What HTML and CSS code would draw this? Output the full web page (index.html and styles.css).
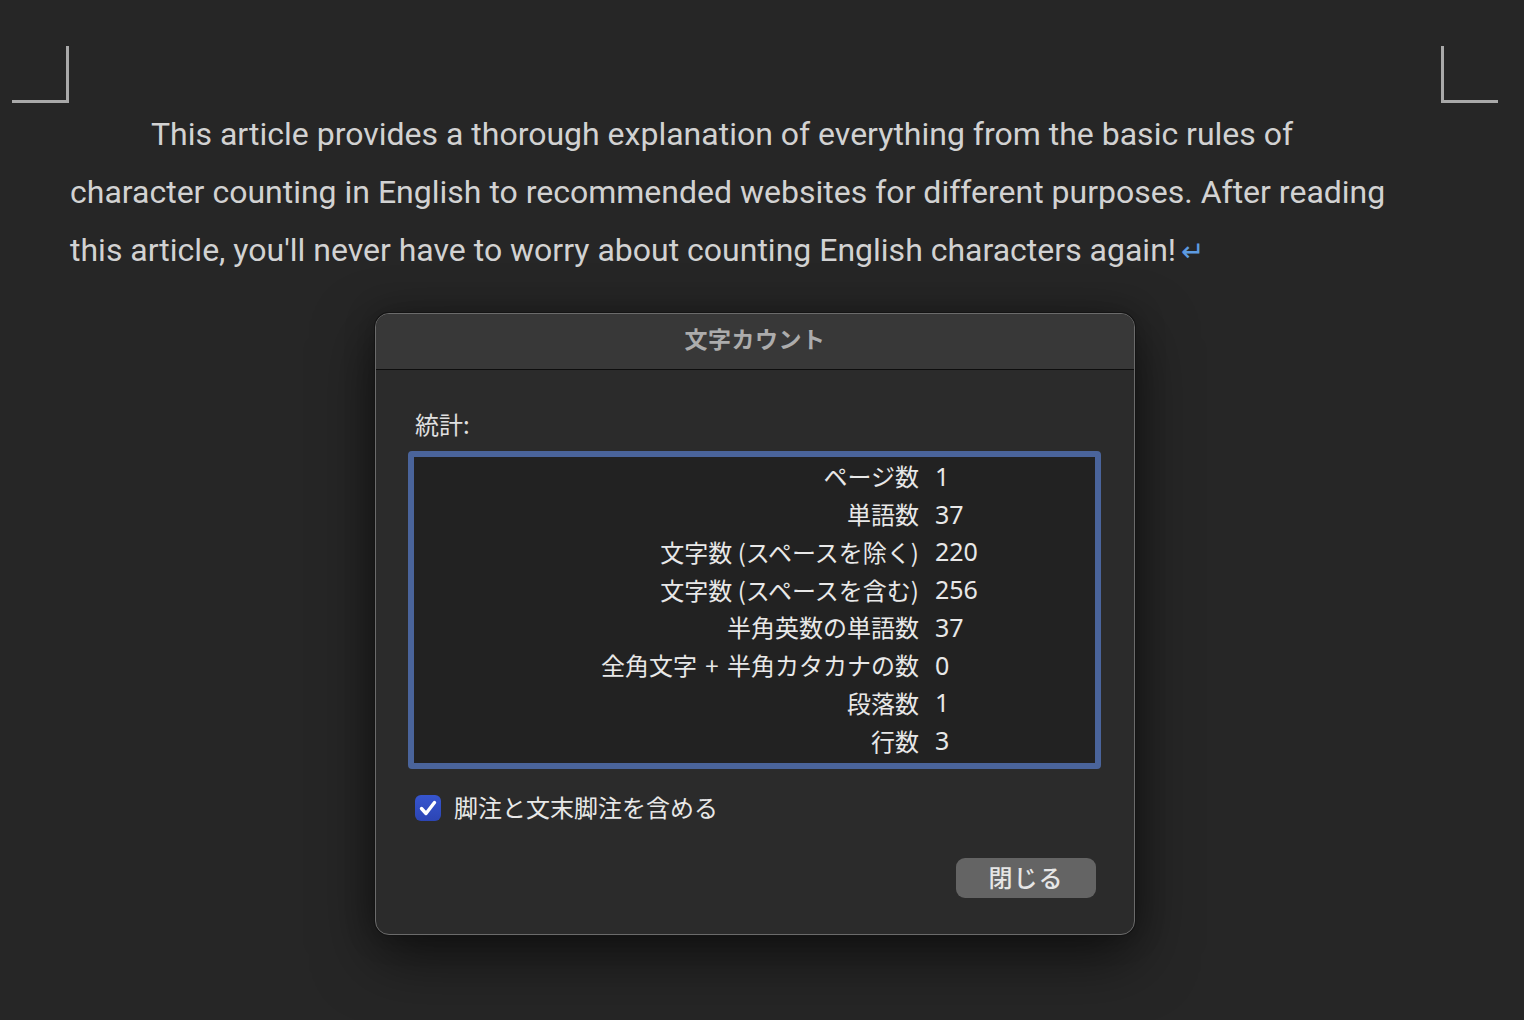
FILE: index.html
```html
<!DOCTYPE html>
<html lang="ja">
<head>
<meta charset="utf-8">
<title>文字カウント</title>
<link rel="stylesheet" href="styles.css">
</head>
<body>
<div class="page">
  <div class="marks">
    <div class="mark mark-left"></div>
    <div class="mark mark-right"></div>
  </div>
  <p class="para">This article provides a thorough explanation of everything from the basic rules of character counting in English to recommended websites for different purposes. After reading this article, you'll never have to worry about counting English characters again!<span class="ret">↵</span></p>

  <div class="dialog">
    <div class="titlebar">文字カウント</div>
    <div class="body">
      <div class="section-label">統計:</div>
      <div class="stats">
        <div class="row"><span class="k">ページ数</span><span class="v">1</span></div>
        <div class="row"><span class="k">単語数</span><span class="v">37</span></div>
        <div class="row"><span class="k">文字数 (スペースを除く)</span><span class="v">220</span></div>
        <div class="row"><span class="k">文字数 (スペースを含む)</span><span class="v">256</span></div>
        <div class="row"><span class="k">半角英数の単語数</span><span class="v">37</span></div>
        <div class="row"><span class="k">全角文字 <span class="plus">+</span> 半角カタカナの数</span><span class="v">0</span></div>
        <div class="row"><span class="k">段落数</span><span class="v">1</span></div>
        <div class="row"><span class="k">行数</span><span class="v">3</span></div>
      </div>
      <label class="check">
        <span class="box"><svg viewBox="0 0 26 26" width="26" height="26"><path d="M6.5 13.5 L11 18.5 L19.5 7.5" fill="none" stroke="#ffffff" stroke-width="3.4" stroke-linecap="round" stroke-linejoin="round"/></svg></span>
        <span class="check-text">脚注と文末脚注を含める</span>
      </label>
      <div class="actions">
        <button class="btn">閉じる</button>
      </div>
    </div>
  </div>
</div>
</body>
</html>
```

FILE: styles.css
```css
html, body {
  margin: 0;
  padding: 0;
  background: #262626;
}
body {
  width: 1524px;
  height: 1020px;
  overflow: hidden;
  font-family: Roboto, "Noto Sans CJK JP", sans-serif;
}
.page {
  display: flex;
  flex-direction: column;
}
.marks {
  display: flex;
  justify-content: space-between;
  padding: 46px 26px 0 12px;
}
.mark {
  width: 57px;
  height: 57px;
  box-sizing: border-box;
  border-bottom: 3px solid #a9a9a9;
}
.mark-left {
  border-right: 3px solid #a9a9a9;
}
.mark-right {
  border-left: 3px solid #a9a9a9;
}
.para {
  margin: 0;
  padding: 0 100px 0 70px;
  font-size: 32px;
  line-height: 58px;
  color: #d2d2d2;
  text-indent: 81px;
  margin-top: 2px;
}
.ret {
  color: #5d9be0;
  font-size: 28px;
  margin-left: 5px;
}
.dialog {
  margin: 32px 0 0 375px;
  width: 760px;
  box-sizing: border-box;
  border: 1px solid #6b6b6b;
  border-radius: 14px;
  background: #2b2b2b;
  box-shadow: 0 0 0 1px #141414, 0 22px 60px rgba(0, 0, 0, 0.55), 0 0 30px rgba(0,0,0,0.25);
  font-family: "Noto Sans CJK JP", "Noto Sans", sans-serif;
  overflow: hidden;
}
.titlebar {
  height: 56px;
  box-sizing: border-box;
  padding-bottom: 8px;
  background: #383838;
  border-bottom: 1px solid #0e0e0e;
  display: flex;
  align-items: center;
  justify-content: center;
  color: #acacac;
  font-size: 23px;
  font-weight: 700;
  letter-spacing: 0.5px;
}
.body {
  padding: 40px 33px 36px 32px;
  display: flex;
  flex-direction: column;
}
.section-label {
  height: 30px;
  line-height: 28px;
  font-size: 24px;
  color: #e0e0e0;
  padding-left: 7px;
}
.stats {
  margin-top: 11px;
  height: 318px;
  box-sizing: border-box;
  border: 6px solid #4a649b;
  border-radius: 4px;
  background: #222222;
  padding-bottom: 4px;
  display: flex;
  flex-direction: column;
}
.row {
  height: 38px;
  display: grid;
  grid-template-columns: 505px 1fr;
  column-gap: 16px;
  align-items: center;
  font-size: 24px;
  color: #e8e8e8;
}
.k {
  text-align: right;
  white-space: nowrap;
}
.plus {
  margin: 0 3px;
}
.v {
  font-family: "Noto Sans", "Noto Sans CJK JP", sans-serif;
  font-size: 25px;
}
.check {
  margin-top: 26px;
  display: flex;
  align-items: center;
  padding-left: 7px;
  gap: 13px;
  height: 26px;
}
.box {
  width: 26px;
  height: 26px;
  border-radius: 6px;
  background: linear-gradient(#3655cf, #2c45b4);
  display: flex;
}
.check-text {
  font-size: 24px;
  line-height: 26px;
  color: #e8e8e8;
  padding-bottom: 2px;
}
.actions {
  margin-top: 37px;
  display: flex;
  justify-content: flex-end;
  padding-right: 5px;
}
.btn {
  width: 140px;
  height: 40px;
  border: none;
  border-radius: 9px;
  background: #646464;
  color: #e6e6e6;
  font-family: "Noto Sans CJK JP", sans-serif;
  font-size: 24px;
  font-weight: 500;
  padding: 0 0 4px 0;
  letter-spacing: 1px;
}
```
